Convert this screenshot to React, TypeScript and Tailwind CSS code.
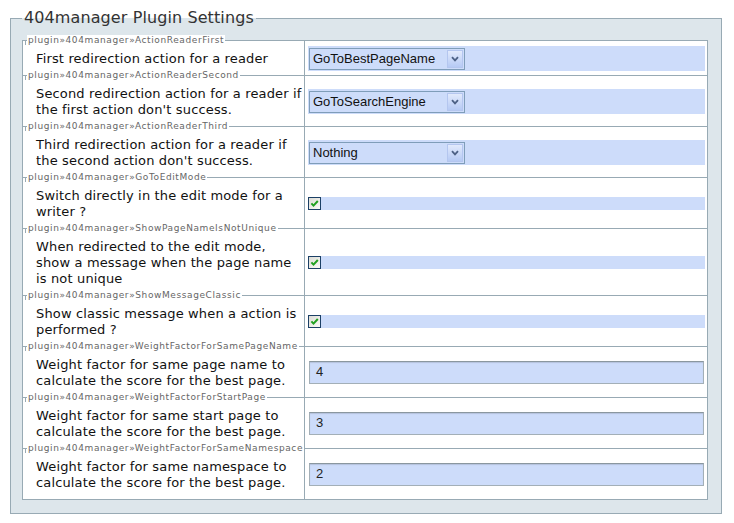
import React from 'react';

type Control =
  | { kind: 'select'; value: string }
  | { kind: 'check' }
  | { kind: 'text'; value: string };

interface Setting {
  name: string;
  lines: string[];
  control: Control;
}

const settings: Setting[] = [
  {
    name: 'ActionReaderFirst',
    lines: ['First redirection action for a reader'],
    control: { kind: 'select', value: 'GoToBestPageName' },
  },
  {
    name: 'ActionReaderSecond',
    lines: ['Second redirection action for a reader if', "the first action don't success."],
    control: { kind: 'select', value: 'GoToSearchEngine' },
  },
  {
    name: 'ActionReaderThird',
    lines: ['Third redirection action for a reader if', "the second action don't success."],
    control: { kind: 'select', value: 'Nothing' },
  },
  {
    name: 'GoToEditMode',
    lines: ['Switch directly in the edit mode for a', 'writer ?'],
    control: { kind: 'check' },
  },
  {
    name: 'ShowPageNameIsNotUnique',
    lines: ['When redirected to the edit mode,', 'show a message when the page name', 'is not unique'],
    control: { kind: 'check' },
  },
  {
    name: 'ShowMessageClassic',
    lines: ['Show classic message when a action is', 'performed ?'],
    control: { kind: 'check' },
  },
  {
    name: 'WeightFactorForSamePageName',
    lines: ['Weight factor for same page name to', 'calculate the score for the best page.'],
    control: { kind: 'text', value: '4' },
  },
  {
    name: 'WeightFactorForStartPage',
    lines: ['Weight factor for same start page to', 'calculate the score for the best page.'],
    control: { kind: 'text', value: '3' },
  },
  {
    name: 'WeightFactorForSameNamespace',
    lines: ['Weight factor for same namespace to', 'calculate the score for the best page.'],
    control: { kind: 'text', value: '2' },
  },
];

function SelectBox({ value }: { value: string }) {
  return (
    <div className="ml-px flex h-[22px] w-[156px] items-center justify-between border border-[#7f9db9] bg-[#cddcfa] pl-[3px] pr-px font-['Liberation_Sans',Arial,sans-serif] text-[13px] leading-none text-[#111]">
      <span>{value}</span>
      <span className="flex h-[18px] w-[16px] items-center justify-center border border-[#b4c6ef] bg-linear-to-b from-[#e2eafc] to-[#b6caf4]">
        <svg width="8" height="6" viewBox="0 0 8 6">
          <path d="M1 1.2 L4 4.4 L7 1.2" stroke="#4d6185" strokeWidth="1.8" fill="none" />
        </svg>
      </span>
    </div>
  );
}

function CheckBox() {
  return (
    <span className="flex h-[13px] w-[13px] shrink-0 items-center justify-center border border-[#1c4066] bg-linear-to-br from-[#dcdcd5] to-[#fbfbf8]">
      <svg width="9" height="9" viewBox="0 0 9 9">
        <path d="M1.4 4.4 L3.5 6.6 L7.8 2" stroke="#21a121" strokeWidth="2" fill="none" />
      </svg>
    </span>
  );
}

function ControlCell({ control }: { control: Control }) {
  if (control.kind === 'select') {
    return (
      <div className="ml-[3px] mr-[2px] bg-[#cddcfa] pb-px pt-[2px]">
        <SelectBox value={control.value} />
      </div>
    );
  }
  if (control.kind === 'check') {
    return (
      <div className="ml-[3px] mr-[2px] flex bg-[#cddcfa]">
        <CheckBox />
      </div>
    );
  }
  return (
    <div className="ml-[4px] mr-[3px] flex h-[23px] items-center border border-[#a3afb7] border-t-[#8a979f] bg-[#cddcfa] pl-[6px] font-['Liberation_Sans',Arial,sans-serif] text-[13px] text-[#222] shadow-[inset_0_1px_1px_rgba(0,0,0,0.12)]">
      {control.value}
    </div>
  );
}

function SettingRow({ setting, first }: { setting: Setting; first: boolean }) {
  return (
    <div className={first ? 'flex' : 'flex border-t border-[#98aab4]'}>
      <div className="relative w-[282px] shrink-0 border-r border-[#98aab4] pb-[8px] pl-[13px] pt-[10px]">
        <span className="absolute left-[2px] top-0 h-[4px] border-l border-[#98aab4]" />
        <span className="absolute -top-[6px] left-[4px] bg-white px-px text-[9px] leading-[11px] tracking-[0.6px] text-[#666]">
          plugin»404manager»{setting.name}
        </span>
        {setting.lines.map((line) => (
          <div key={line} className="whitespace-nowrap text-[13px] leading-[16px] tracking-[0.15px] text-[#111]">
            {line}
          </div>
        ))}
      </div>
      <div className="flex flex-1 flex-col justify-center">
        <ControlCell control={setting.control} />
      </div>
    </div>
  );
}

export default function App() {
  return (
    <div className="min-h-[523px] w-[734px] overflow-hidden bg-white pb-[10px] pt-[8px] font-['DejaVu_Sans',Verdana,sans-serif] text-black">
      <fieldset className="ml-[10px] w-[712px] border border-[#98aab4] bg-[#dde6eb] pb-[13px] pl-[11px] pr-[13px]">
        <legend className="px-[2px] text-[16px] leading-[20px] tracking-[0.1px] text-[#333]">404manager Plugin Settings</legend>
        <div className="mt-[12px] w-[686px] border border-[#98aab4] bg-white">
          {settings.map((s, i) => (
            <SettingRow key={s.name} setting={s} first={i === 0} />
          ))}
        </div>
      </fieldset>
    </div>
  );
}
